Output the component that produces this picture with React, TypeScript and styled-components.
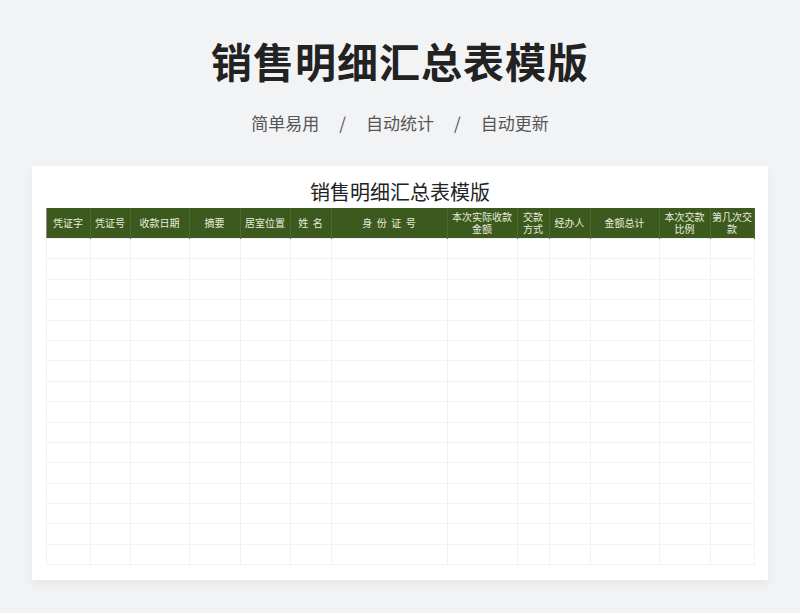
import React from "react";
import styled, { createGlobalStyle } from "styled-components";

const Global = createGlobalStyle`
  html, body { margin: 0; padding: 0; background: #f2f3f5; }
  body { font-family: "Noto Sans CJK SC", "Noto Sans", sans-serif; }
`;

const Page = styled.div`
  width: 800px;
  height: 613px;
  display: flex;
  flex-direction: column;
  align-items: center;
  overflow: hidden;
`;

const Title = styled.h1`
  margin: 32px 0 0;
  font-size: 41px;
  line-height: 56px;
  font-weight: 700;
  color: #222;
  letter-spacing: 1px;
`;

const Sub = styled.div`
  margin-top: 23px;
  display: flex;
  gap: 20px;
  font-size: 17px;
  line-height: 24px;
  color: #555;
`;

const Card = styled.div`
  margin-top: 31px;
  width: 736px;
  height: 414px;
  background: #fff;
  box-shadow: 0 4px 10px rgba(0, 0, 0, 0.06);
  display: flex;
  flex-direction: column;
  align-items: center;
  box-sizing: border-box;
  padding-top: 10px;
`;

const SheetTitle = styled.div`
  font-size: 20px;
  line-height: 32px;
  color: #222;
`;

const Table = styled.table`
  border-collapse: collapse;
  table-layout: fixed;
  width: 708px;
  border: 1px solid #8c8c8c;
  border-top: none;
`;

const Th = styled.th`
  background: #3c5a1e;
  color: #e8eddf;
  font-weight: 400;
  font-size: 10px;
  line-height: 12px;
  height: 30px;
  padding: 0;
  border-right: 1px solid #4d6a2f;
  text-align: center;
  white-space: pre-wrap;
`;

const Td = styled.td`
  height: 19.4px;
  padding: 0;
  border: 1px solid #f2f2f2;
`;

const cols: [string, number][] = [
  ["凭证字", 44], ["凭证号", 40], ["收款日期", 59], ["摘要", 51], ["居室位置", 50],
  ["姓  名", 41], ["身  份  证  号", 116], ["本次实际收款\n金额", 70], ["交款\n方式", 32],
  ["经办人", 41], ["金额总计", 69], ["本次交款\n比例", 51], ["第几次交\n款", 44],
];

export default function App() {
  return (
    <Page>
      <Global />
      <Title>销售明细汇总表模版</Title>
      <Sub>
        <span>简单易用</span><span>/</span><span>自动统计</span><span>/</span><span>自动更新</span>
      </Sub>
      <Card>
        <SheetTitle>销售明细汇总表模版</SheetTitle>
        <Table>
          <colgroup>{cols.map(([, w], i) => <col key={i} style={{ width: w }} />)}</colgroup>
          <thead>
            <tr>{cols.map(([t], i) => <Th key={i}>{t}</Th>)}</tr>
          </thead>
          <tbody>
            {Array.from({ length: 16 }).map((_, r) => (
              <tr key={r}>{cols.map((_, i) => <Td key={i} />)}</tr>
            ))}
          </tbody>
        </Table>
      </Card>
    </Page>
  );
}
